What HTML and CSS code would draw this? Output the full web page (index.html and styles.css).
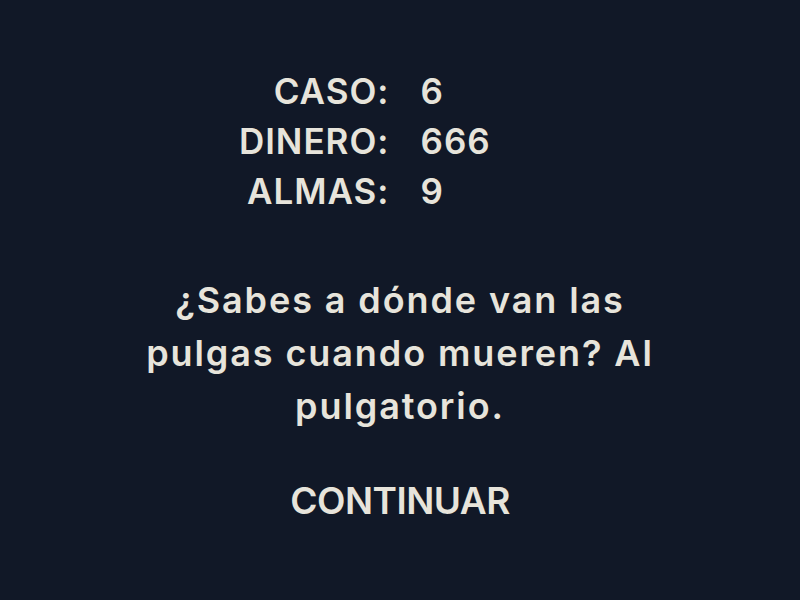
FILE: index.html
```html
<!DOCTYPE html>
<html lang="es">
<head>
<meta charset="utf-8">
<title>Caso</title>
<link rel="stylesheet" href="styles.css">
</head>
<body>
<main class="screen">
  <div class="stats">
    <span class="label">CASO:</span><span class="value">6</span>
    <span class="label">DINERO:</span><span class="value">666</span>
    <span class="label">ALMAS:</span><span class="value">9</span>
  </div>
  <p class="joke">¿Sabes a dónde van las pulgas cuando mueren? Al pulgatorio.</p>
  <button class="continue">CONTINUAR</button>
</main>
</body>
</html>
```
FILE: styles.css
```css
html, body {
  margin: 0;
  padding: 0;
  background: #111827;
  height: 100%;
}
body {
  font-family: Inter, "Open Sans", "DejaVu Sans", sans-serif;
  color: #e7e4db;
}
.screen {
  display: flex;
  flex-direction: column;
  align-items: center;
  padding-top: 66px;
}
.stats {
  display: grid;
  grid-template-columns: 1fr 1fr;
  column-gap: 31px;
  width: 340px;
  padding-left: 10px;
  font-size: 35px;
  font-weight: 600;
  line-height: 50px;
  letter-spacing: 1px;
}
.label { text-align: right; }
.value { text-align: left; }
.joke {
  margin: 58px 0 0;
  width: 540px;
  text-align: center;
  font-size: 36px;
  font-weight: 600;
  line-height: 53px;
  letter-spacing: 1.9px;
}
.continue {
  margin-top: 43px;
  background: none;
  border: none;
  padding: 0;
  color: inherit;
  font-family: inherit;
  font-size: 37px;
  font-weight: 600;
  letter-spacing: -0.5px;
  line-height: 50px;
  cursor: pointer;
}
```
